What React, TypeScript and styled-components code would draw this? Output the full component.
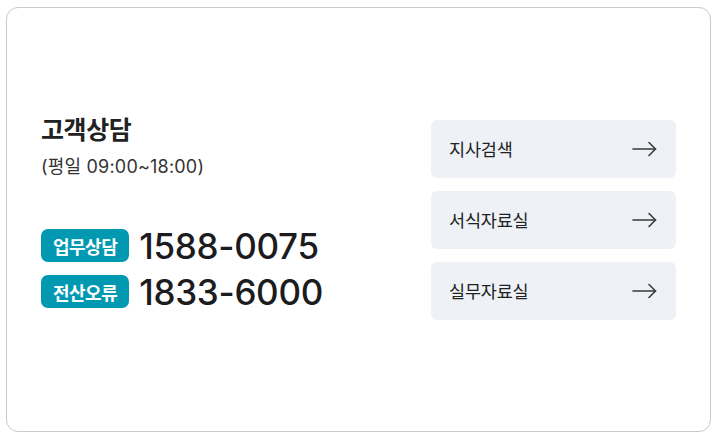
import styled, { createGlobalStyle } from "styled-components";

const GlobalStyle = createGlobalStyle`
  html, body {
    margin: 0;
    padding: 0;
    background: #ffffff;
    font-family: Inter, "Noto Sans CJK KR", sans-serif;
  }
`;

const Page = styled.div`
  padding: 7px 4px 4px 6px;
`;

const Card = styled.section`
  box-sizing: border-box;
  height: 425px;
  border: 1px solid #c8cbd0;
  border-radius: 12px;
  display: flex;
  align-items: center;
  justify-content: space-between;
  padding: 0 34px 0 34px;
`;

const Info = styled.div`
  display: flex;
  flex-direction: column;
  margin-top: -17px;
`;

const Title = styled.h2`
  margin: 0;
  font-size: 25px;
  font-weight: 700;
  line-height: 32px;
  color: #222;
  letter-spacing: -0.4px;
`;

const Hours = styled.p`
  margin: 9px 0 0;
  font-size: 18px;
  line-height: 24px;
  color: #333;
  letter-spacing: 0.2px;
`;

const Phones = styled.div`
  display: flex;
  flex-direction: column;
  gap: 12px;
  margin-top: 50px;
`;

const PhoneRow = styled.div`
  display: flex;
  align-items: center;
  gap: 10px;
`;

const Badge = styled.span`
  display: inline-flex;
  align-items: center;
  height: 33px;
  padding: 0 12px;
  border-radius: 7px;
  background: #0199b1;
  color: #fff;
  font-size: 18px;
  font-weight: 700;
  letter-spacing: -0.5px;
`;

const Number = styled.span`
  font-size: 35px;
  font-weight: 500;
  line-height: 34px;
  color: #1c1c1e;
  letter-spacing: -0.3px;
`;

const Links = styled.nav`
  display: flex;
  flex-direction: column;
  gap: 13px;
`;

const LinkButton = styled.a`
  box-sizing: border-box;
  width: 245px;
  height: 58px;
  display: flex;
  align-items: center;
  justify-content: space-between;
  padding: 0 19px 0 18px;
  border-radius: 6px;
  background: #eef1f6;
  color: #222;
  font-size: 17.5px;
  letter-spacing: -0.2px;
  text-decoration: none;
`;

const Arrow = () => (
  <svg width="25" height="16" viewBox="0 0 25 16" fill="none" stroke="#3a3a3a" strokeWidth="1.6" strokeLinecap="round" strokeLinejoin="round">
    <path d="M1 8H23.5" />
    <path d="M17 1.5L23.5 8L17 14.5" />
  </svg>
);

const phones = [
  { label: "업무상담", number: "1588-0075" },
  { label: "전산오류", number: "1833-6000" },
];

const links = ["지사검색", "서식자료실", "실무자료실"];

export default function App() {
  return (
    <Page>
      <GlobalStyle />
      <Card>
        <Info>
          <Title>고객상담</Title>
          <Hours>(평일 09:00~18:00)</Hours>
          <Phones>
            {phones.map((p) => (
              <PhoneRow key={p.label}>
                <Badge>{p.label}</Badge>
                <Number>{p.number}</Number>
              </PhoneRow>
            ))}
          </Phones>
        </Info>
        <Links>
          {links.map((l) => (
            <LinkButton key={l} href="#">
              {l}
              <Arrow />
            </LinkButton>
          ))}
        </Links>
      </Card>
    </Page>
  );
}
